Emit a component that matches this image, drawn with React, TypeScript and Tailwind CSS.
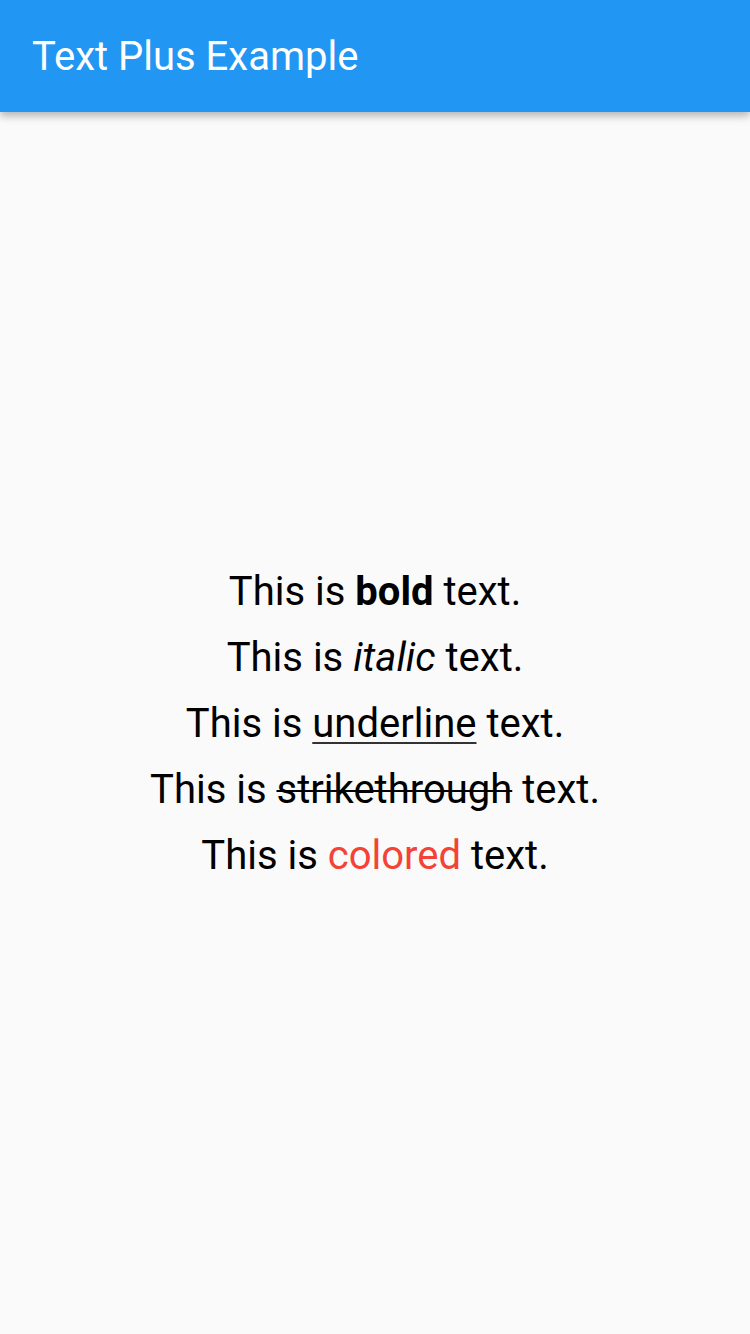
import React from "react";

export default function App() {
  return (
    <div
      className="flex min-h-[1334px] w-[750px] flex-col bg-[#fafafa]"
      style={{ fontFamily: "Roboto, 'Noto Sans', sans-serif" }}
    >
      <header className="relative z-10 flex h-[112px] items-center bg-[#2196f3] px-8 pt-[2px] shadow-[0_4px_8px_rgba(0,0,0,0.28)]">
        <h1 className="text-[40px] font-normal leading-[48px] text-white">Text Plus Example</h1>
      </header>
      <main className="flex flex-1 flex-col items-center justify-center gap-[19px] text-[40px] leading-[47px] text-black">
        <p>
          This is <span className="font-bold">bold</span> text.
        </p>
        <p>
          This is <span className="italic">italic</span> text.
        </p>
        <p>
          This is <span className="underline decoration-[#333] decoration-2 underline-offset-[5px]">underline</span> text.
        </p>
        <p>
          This is <span className="line-through decoration-2">strikethrough</span> text.
        </p>
        <p>
          This is <span className="text-[#f44336]">colored</span> text.
        </p>
      </main>
    </div>
  );
}
